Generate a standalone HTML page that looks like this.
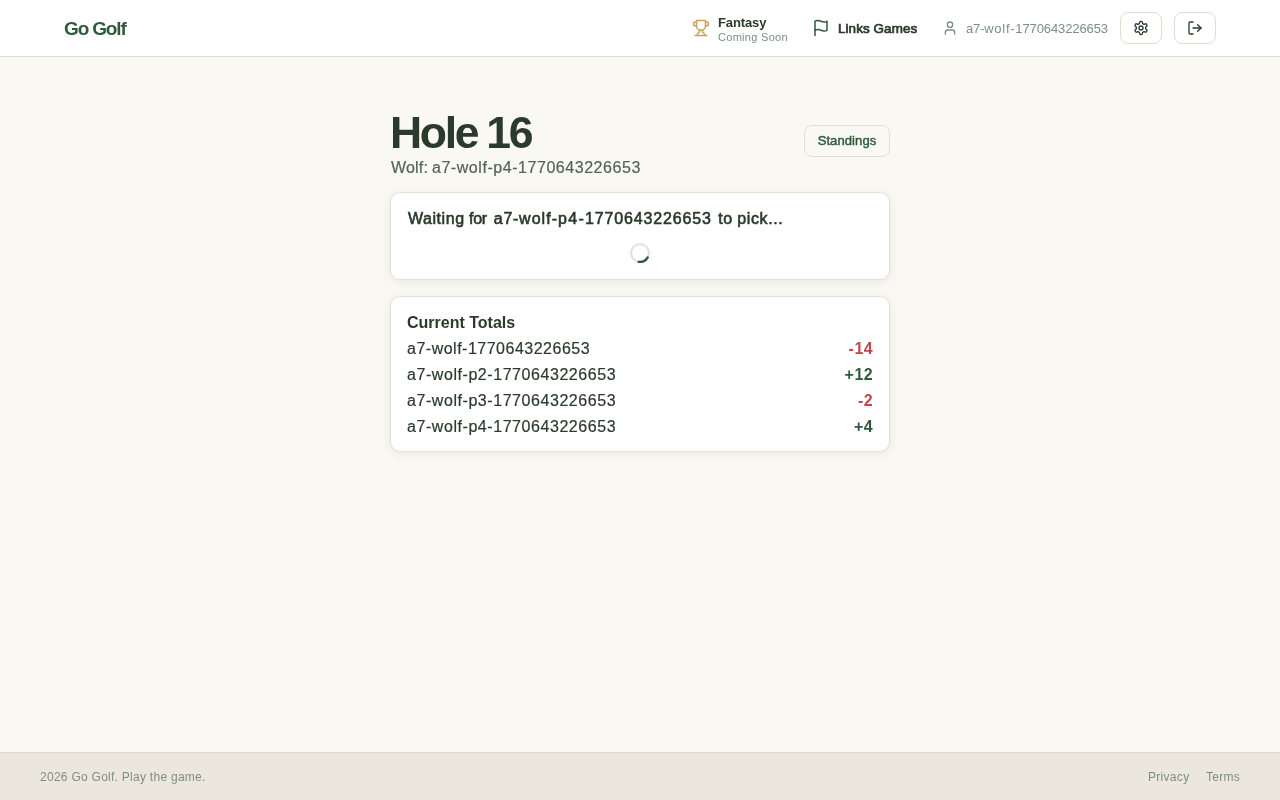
<!DOCTYPE html>
<html lang="en">
<head>
<meta charset="utf-8">
<title>Go Golf</title>
<style>
*{box-sizing:border-box;margin:0;padding:0}
html,body{width:1280px;height:800px;overflow:hidden}
body{background:#faf8f3;font-family:"Liberation Sans",Arial,sans-serif;color:#2a3a2b;position:relative;-webkit-font-smoothing:antialiased}
header{position:absolute;left:0;top:0;width:1280px;height:57px;background:#fff;border-bottom:1px solid #e2ded3}
.brand{position:absolute;left:64px;top:16.5px;font-size:19px;line-height:24px;font-weight:700;color:#2d5a3c;white-space:nowrap;letter-spacing:-1.15px}
.nav{position:absolute;top:0;height:56px;white-space:nowrap}
.nav svg{position:absolute;fill:none;stroke-linecap:round;stroke-linejoin:round;stroke-width:2}
.t{position:absolute;white-space:nowrap}
.fantasy{left:718px;top:15px;font-size:13px;line-height:15px;font-weight:700;color:#2a3a2b;letter-spacing:-.12px}
.soon{left:718px;top:31px;font-size:11px;line-height:13px;color:#7d8f80;letter-spacing:.3px}
.links{left:838px;top:21px;font-size:13.4px;line-height:16px;font-weight:400;-webkit-text-stroke:.7px #2a3a2b;color:#2a3a2b;letter-spacing:.1px}
.user{left:966px;top:21px;font-size:13px;line-height:16px;color:#7d8f80;letter-spacing:.07px}
.ibtn{position:absolute;top:12px;width:42px;height:32px;border:1px solid #e3dccf;border-radius:8px;background:#fff}
.ibtn svg{position:absolute;left:12px;top:7px;fill:none;stroke:#2a3a2b;stroke-linecap:round;stroke-linejoin:round;stroke-width:2}
main{position:absolute;left:390px;top:57px;width:500px}
h1{position:absolute;left:-.5px;top:51px;font-size:44.5px;line-height:50px;font-weight:700;color:#2a3a2b;letter-spacing:-2.3px;word-spacing:-1px;white-space:nowrap}
.sub{-webkit-text-stroke:.2px #536455;position:absolute;left:1px;top:101px;font-size:16px;line-height:20px;color:#536455;white-space:nowrap;letter-spacing:.55px;word-spacing:-1.2px}
.sbtn{position:absolute;left:414px;top:68px;width:86px;height:32px;border:1px solid #e3dccf;border-radius:8px;font-size:13px;line-height:30px;text-align:center;font-weight:400;-webkit-text-stroke:.45px #2d5a3c;letter-spacing:.1px;color:#2d5a3c;white-space:nowrap}
.card{position:absolute;left:0;width:500px;background:#fff;border:1px solid #e6e0d4;border-radius:10px;box-shadow:0 2px 10px rgba(40,35,20,.07)}
.c1{top:135px;height:88px}
.c2{top:239px;height:156px}
.ct{position:absolute;left:16px;font-size:16px;line-height:20px;font-weight:700;color:#2a3a2b;white-space:nowrap}
.wt{font-weight:400;-webkit-text-stroke:.6px #2a3a2b}
.row{-webkit-text-stroke:.2px #2a3a2b;position:absolute;left:15.8px;right:16px;height:20px;font-size:16px;line-height:20px;color:#2a3a2b;white-space:nowrap;letter-spacing:.5px}
.row b{-webkit-text-stroke:0;position:absolute;right:0;top:0;font-weight:700;letter-spacing:.5px}
.brand,.t,h1,.sub,.sbtn,.ct,.row,footer span{will-change:transform}
.neg{color:#c0474a}.pos{color:#2d5a3c}
.spin{position:absolute;left:239px;top:50px}
footer{position:absolute;left:0;top:752px;width:1280px;height:48px;background:#ece7dc;border-top:1px solid #dfdbcf;font-size:12px;line-height:16px;color:#7d8f80}
footer span{position:absolute;top:16px;white-space:nowrap}
</style>
</head>
<body>
<header>
  <div class="brand">Go Golf</div>
  <div class="nav">
    <svg style="left:692px;top:19px;stroke:#c9a45c" width="18" height="18" viewBox="0 0 24 24"><path d="M6 9H4.5a2.5 2.5 0 0 1 0-5H6"/><path d="M18 9h1.5a2.5 2.5 0 0 0 0-5H18"/><path d="M4 22h16"/><path d="M10 14.66V17c0 .55-.47.98-.97 1.21C7.850 18.750 7 20.240 7 22"/><path d="M14 14.660V17c0 .55.47.98.97 1.210C16.150 18.750 17 20.240 17 22"/><path d="M18 2H6v7a6 6 0 0 0 12 0V2Z"/></svg>
    <div class="t fantasy">Fantasy</div>
    <div class="t soon">Coming Soon</div>
    <svg style="left:812px;top:19px;stroke:#2d5a3c" width="18" height="18" viewBox="0 0 24 24"><path d="M4 15s1-1 4-1 5 2 8 2 4-1 4-1V3s-1 1-4 1-5-2-8-2-4 1-4 1z"/><line x1="4" x2="4" y1="22" y2="15"/></svg>
    <div class="t links">Links Games</div>
    <svg style="left:942px;top:20px;stroke:#7d8f80" width="16" height="16" viewBox="0 0 24 24"><path d="M19 21v-2a4 4 0 0 0-4-4H9a4 4 0 0 0-4 4v2"/><circle cx="12" cy="7" r="4"/></svg>
    <div class="t user"><span style="letter-spacing:-.2px">a7-</span><span style="letter-spacing:.73px">wolf-</span><span style="letter-spacing:-.1px">1770643226653</span></div>
  </div>
  <div class="ibtn" style="left:1120px"><svg width="16" height="16" viewBox="0 0 24 24"><path d="M12.220 2h-.440a2 2 0 0 0-2 2v.180a2 2 0 0 1-1 1.730l-.430.250a2 2 0 0 1-2 0l-.150-.080a2 2 0 0 0-2.730.730l-.220.380a2 2 0 0 0 .730 2.730l.150.100a2 2 0 0 1 1 1.720v.510a2 2 0 0 1-1 1.740l-.150.090a2 2 0 0 0-.730 2.730l.220.380a2 2 0 0 0 2.730.730l.150-.080a2 2 0 0 1 2 0l.430.250a2 2 0 0 1 1 1.730V20a2 2 0 0 0 2 2h.440a2 2 0 0 0 2-2v-.180a2 2 0 0 1 1-1.730l.430-.250a2 2 0 0 1 2 0l.150.080a2 2 0 0 0 2.730-.730l.220-.390a2 2 0 0 0-.730-2.730l-.150-.080a2 2 0 0 1-1-1.740v-.500a2 2 0 0 1 1-1.740l.150-.090a2 2 0 0 0 .730-2.730l-.220-.380a2 2 0 0 0-2.730-.730l-.150.080a2 2 0 0 1-2 0l-.430-.250a2 2 0 0 1-1-1.730V4a2 2 0 0 0-2-2z"/><circle cx="12" cy="12" r="3"/></svg></div>
  <div class="ibtn" style="left:1174px"><svg width="16" height="16" viewBox="0 0 24 24"><path d="M9 21H5a2 2 0 0 1-2-2V5a2 2 0 0 1 2-2h4"/><polyline points="16 17 21 12 16 7"/><line x1="21" x2="9" y1="12" y2="12"/></svg></div>
</header>
<main>
  <h1>Hole 16</h1>
  <div class="sub"><span style="letter-spacing:.2px">Wolf:</span> a7-wolf-p4-1770643226653</div>
  <div class="sbtn">Standings</div>
  <div class="card c1">
    <div class="ct wt" style="top:16px;left:17px"><span style="letter-spacing:.55px">Waiting</span> <span style="letter-spacing:-.3px">for</span> <span style="letter-spacing:.7px;margin-left:2.5px">a7-</span><span style="letter-spacing:1.05px">wolf-</span><span style="letter-spacing:1.3px">p4-</span><span style="letter-spacing:.85px">1770643226653</span> <span style="letter-spacing:.6px;margin-left:2px">to</span> <span style="letter-spacing:.6px">pick...</span></div>
    <svg class="spin" width="20" height="20" viewBox="0 0 20 20"><circle cx="10" cy="10" r="8.900" fill="none" stroke="#dce5df" stroke-width="2.200"/><path d="M17.710 14.450A8.900 8.900 0 0 1 8.610 18.790" fill="none" stroke="#2d5a3c" stroke-width="2.300" stroke-linecap="round"/></svg>
  </div>
  <div class="card c2">
    <div class="ct" style="top:16px">Current Totals</div>
    <div class="row" style="top:42px">a7-wolf-1770643226653<b class="neg">-14</b></div>
    <div class="row" style="top:68px;letter-spacing:.56px">a7-wolf-p2-1770643226653<b class="pos">+12</b></div>
    <div class="row" style="top:94px;letter-spacing:.56px">a7-wolf-p3-1770643226653<b class="neg">-2</b></div>
    <div class="row" style="top:120px;letter-spacing:.56px">a7-wolf-p4-1770643226653<b class="pos">+4</b></div>
  </div>
</main>
<footer>
  <span style="left:40px;letter-spacing:.27px">2026 Go Golf. Play the game.</span>
  <span style="left:1148px;letter-spacing:.3px">Privacy</span>
  <span style="left:1206px;letter-spacing:.25px">Terms</span>
</footer>
</body>
</html>
